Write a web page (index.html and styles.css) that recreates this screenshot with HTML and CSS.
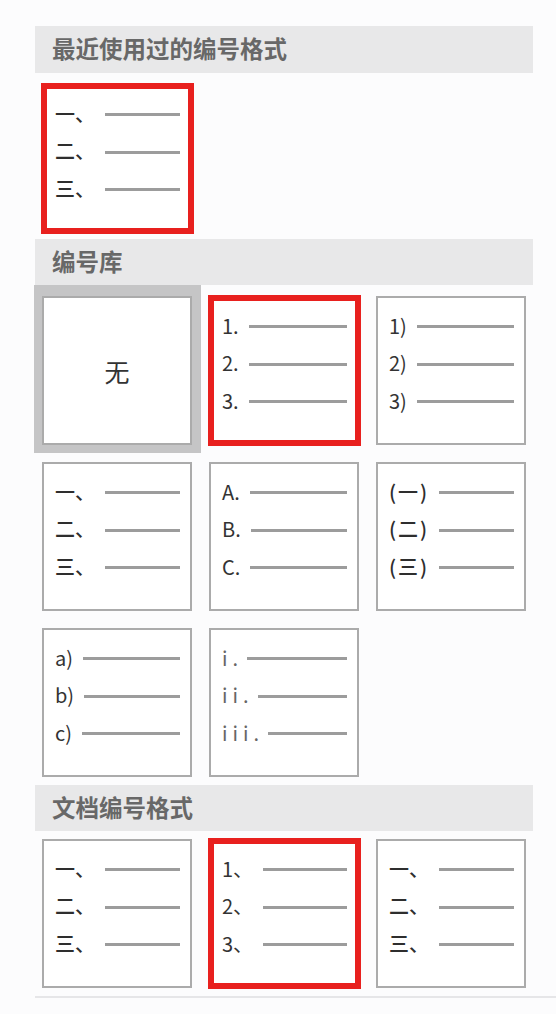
FILE: index.html
```html
<!DOCTYPE html>
<html lang="zh-CN">
<head>
<meta charset="utf-8">
<title>编号格式</title>
<link rel="stylesheet" href="styles.css">
</head>
<body>
<div class="panel">
  <section class="group group-recent">
    <div class="group-title">最近使用过的编号格式</div>
    <div class="grid">
      <div class="cell is-marked">
        <div class="row"><span class="label label-cn">一、</span><span class="rule"></span></div>
        <div class="row"><span class="label label-cn">二、</span><span class="rule"></span></div>
        <div class="row"><span class="label label-cn">三、</span><span class="rule"></span></div>
      </div>
    </div>
  </section>

  <section class="group group-library">
    <div class="group-title">编号库</div>
    <div class="grid">
      <div class="cell-wrap is-selected">
        <div class="cell cell-none"><span class="none-text">无</span></div>
      </div>
      <div class="cell is-marked">
        <div class="row"><span class="label">1.</span><span class="rule"></span></div>
        <div class="row"><span class="label">2.</span><span class="rule"></span></div>
        <div class="row"><span class="label">3.</span><span class="rule"></span></div>
      </div>
      <div class="cell">
        <div class="row"><span class="label">1)</span><span class="rule"></span></div>
        <div class="row"><span class="label">2)</span><span class="rule"></span></div>
        <div class="row"><span class="label">3)</span><span class="rule"></span></div>
      </div>
      <div class="cell">
        <div class="row"><span class="label label-cn">一、</span><span class="rule"></span></div>
        <div class="row"><span class="label label-cn">二、</span><span class="rule"></span></div>
        <div class="row"><span class="label label-cn">三、</span><span class="rule"></span></div>
      </div>
      <div class="cell">
        <div class="row"><span class="label">A.</span><span class="rule"></span></div>
        <div class="row"><span class="label">B.</span><span class="rule"></span></div>
        <div class="row"><span class="label">C.</span><span class="rule"></span></div>
      </div>
      <div class="cell">
        <div class="row"><span class="label label-cn label-paren">(一)</span><span class="rule"></span></div>
        <div class="row"><span class="label label-cn label-paren">(二)</span><span class="rule"></span></div>
        <div class="row"><span class="label label-cn label-paren">(三)</span><span class="rule"></span></div>
      </div>
      <div class="cell">
        <div class="row"><span class="label">a)</span><span class="rule"></span></div>
        <div class="row"><span class="label">b)</span><span class="rule"></span></div>
        <div class="row"><span class="label">c)</span><span class="rule"></span></div>
      </div>
      <div class="cell">
        <div class="row"><span class="label label-roman">i.</span><span class="rule"></span></div>
        <div class="row"><span class="label label-roman">ii.</span><span class="rule"></span></div>
        <div class="row"><span class="label label-roman">iii.</span><span class="rule"></span></div>
      </div>
    </div>
  </section>

  <section class="group group-document">
    <div class="group-title">文档编号格式</div>
    <div class="grid">
      <div class="cell">
        <div class="row"><span class="label label-cn">一、</span><span class="rule"></span></div>
        <div class="row"><span class="label label-cn">二、</span><span class="rule"></span></div>
        <div class="row"><span class="label label-cn">三、</span><span class="rule"></span></div>
      </div>
      <div class="cell is-marked">
        <div class="row"><span class="label">1、</span><span class="rule"></span></div>
        <div class="row"><span class="label">2、</span><span class="rule"></span></div>
        <div class="row"><span class="label">3、</span><span class="rule"></span></div>
      </div>
      <div class="cell">
        <div class="row"><span class="label label-cn">一、</span><span class="rule"></span></div>
        <div class="row"><span class="label label-cn">二、</span><span class="rule"></span></div>
        <div class="row"><span class="label label-cn">三、</span><span class="rule"></span></div>
      </div>
    </div>
  </section>
</div>
</body>
</html>
```

FILE: styles.css
```css
html {
  background: #fcfcfd;
}

body {
  margin: 0;
  padding: 0;
  font-family: "Noto Sans CJK SC", "Noto Sans", sans-serif;
  color: #333333;
}

.panel {
  margin-left: 35px;
  width: 498px;
  padding-top: 26px;
}

.group-title {
  height: 46px;
  line-height: 44px;
  background: #e8e8e9;
  padding-left: 17px;
  font-size: 23.5px;
  font-weight: 700;
  color: #686868;
}

.grid {
  display: grid;
  grid-template-columns: repeat(3, 150px);
  grid-auto-rows: 149px;
  column-gap: 17px;
  row-gap: 17px;
  padding-left: 7px;
}

.group-recent .grid {
  padding-top: 11px;
  padding-bottom: 6px;
}

.group-recent .group-title {
  height: 47px;
  line-height: 45px;
}

.group-library .grid {
  padding-top: 11px;
  padding-bottom: 8px;
}

.group-document .grid {
  padding-top: 8px;
  padding-bottom: 8px;
  border-bottom: 2px solid #e6e6e8;
  margin-right: -23px;
}

.cell {
  position: relative;
  box-sizing: border-box;
  background: #ffffff;
  border: 2px solid #ababab;
  padding: 10px 10px 0 11px;
  display: flex;
  flex-direction: column;
}

.cell.is-marked::after {
  content: "";
  position: absolute;
  left: -3px;
  right: -4px;
  top: -3px;
  bottom: -3px;
  border: 6px solid #e8201e;
}

.cell-wrap {
  display: flex;
}

.cell-wrap .cell {
  flex: 1;
}

.cell-wrap.is-selected {
  background: #c5c5c6;
  margin: -11px -9px -8px -8px;
  padding: 11px 9px 8px 8px;
}

.cell-none {
  align-items: center;
  justify-content: center;
  padding: 0;
}

.none-text {
  font-size: 25px;
  color: #333333;
}

.row {
  height: 37.5px;
  display: flex;
  align-items: center;
}

.label {
  font-size: 20px;
  line-height: 1;
  color: #333333;
  white-space: nowrap;
  position: relative;
  top: -1px;
}

.label-cn {
  font-weight: 500;
  color: #2e2e2e;
}

.label-paren {
  letter-spacing: 2px;
}

.label-roman {
  letter-spacing: 5px;
  color: #666666;
}

.rule {
  flex: 1;
  height: 3px;
  margin-left: 10px;
  background: #9c9c9c;
}

.label-roman + .rule {
  margin-left: 4px;
}
```
